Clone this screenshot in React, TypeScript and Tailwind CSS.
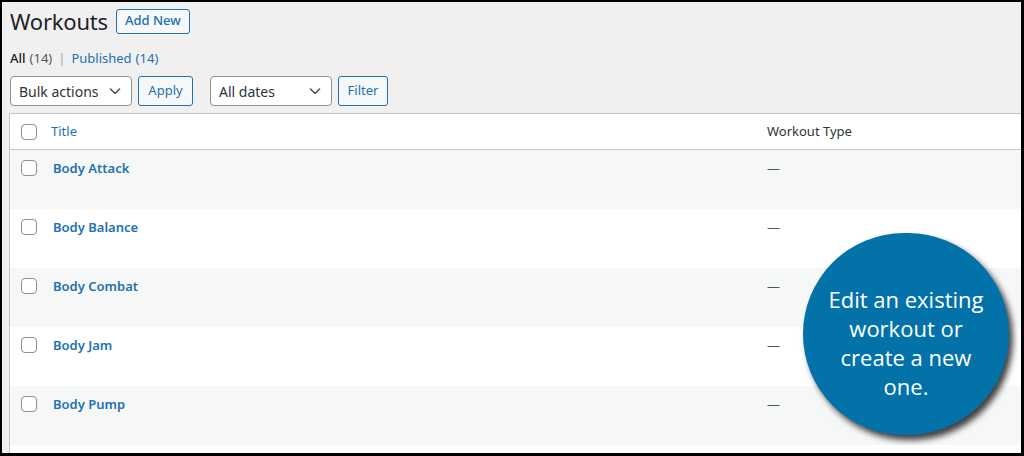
import React from 'react';

const font = { fontFamily: '"Noto Sans", "Open Sans", sans-serif' };

const workouts = ['Body Attack', 'Body Balance', 'Body Combat', 'Body Jam', 'Body Pump'];

const Chevron = () => (
  <svg width="16" height="16" viewBox="0 0 16 16" fill="none" className="shrink-0">
    <path d="M3.5 6l4.5 4.5L12.5 6" stroke="#50575e" strokeWidth="1.6" strokeLinecap="round" strokeLinejoin="round" />
  </svg>
);

const Checkbox = () => (
  <span className="block w-4 h-4 rounded-[4px] border border-[#8c8f94] bg-white shrink-0" />
);

const Select = ({ label, width }: { label: string; width: string }) => (
  <div className={`${width} h-[30px] flex items-center justify-between pl-2 pr-2 bg-white border border-[#8c8f94] rounded-[4px] text-[14px] text-[#2c3338]`}>
    <span>{label}</span>
    <Chevron />
  </div>
);

const Button = ({ label, width }: { label: string; width: string }) => (
  <div className={`${width} h-[30px] flex items-center justify-center bg-[#f6f7f7] border border-[#2271b1] rounded-[3px] text-[13px] text-[#2271b1]`}>
    {label}
  </div>
);

export default function App() {
  return (
    <div
      style={font}
      className="relative w-[1024px] h-[456px] overflow-hidden bg-[#f0f0f1] border-l-2 border-t-2 border-r-[3px] border-b-[3px] border-black"
    >
      <div className="pl-[7px] pt-[4px]">
        <div className="pl-px flex items-center gap-[8px]">
          <h1 className="text-[22px] leading-[30px] text-[#1d2327] tracking-[-0.2px]">Workouts</h1>
          <div className="h-[25px] px-[8px] flex items-center border border-[#2271b1] rounded-[3px] bg-[#f6f7f7] text-[13px] font-medium text-[#2271b1]">
            Add New
          </div>
        </div>

        <div className="pl-px mt-[12px] flex items-center text-[13px] leading-[20px] text-[#50575e]">
          <span className="text-[#1d2327] font-medium">All</span>
          <span className="ml-1">(14)</span>
          <span className="mx-[6px] text-[#a7aaad]">|</span>
          <span className="text-[#2271b1]">Published</span>
          <span className="ml-1 text-[#2271b1]">(14)</span>
        </div>

        <div className="pl-px mt-[8px] flex items-center">
          <Select label="Bulk actions" width="w-[122px]" />
          <div className="ml-[6px]">
            <Button label="Apply" width="w-[55px]" />
          </div>
          <div className="ml-[17px]">
            <Select label="All dates" width="w-[122px]" />
          </div>
          <div className="ml-[6px]">
            <Button label="Filter" width="w-[50px]" />
          </div>
        </div>

        <div className="mt-[7px] bg-white border-l border-t border-[#c3c4c7] -mr-[20px]">
          <div className="h-[36px] flex items-center border-b border-[#c3c4c7] text-[13px]">
            <div className="pl-[11px] w-[41px]">
              <Checkbox />
            </div>
            <div className="w-[716px] text-[#2271b1]">Title</div>
            <div className="text-[#2c3338]">Workout Type</div>
          </div>
          {workouts.map((w, i) => (
            <div
              key={w}
              className={`h-[59px] flex items-start pt-[9px] text-[13px] ${i % 2 === 0 ? 'bg-[#f6f7f7]' : 'bg-white'}`}
            >
              <div className="pl-[11px] w-[43px] pt-[1px]">
                <Checkbox />
              </div>
              <div className="w-[714px] font-semibold text-[#2271b1] leading-[18px]">{w}</div>
              <div className="text-[#50575e] leading-[18px]">—</div>
            </div>
          ))}
          <div className="h-[20px] bg-white" />
        </div>
      </div>

      <div className="absolute left-[801px] top-[231px] w-[206px] h-[202px] rounded-full bg-[#0372a9] shadow-[4px_5px_6px_rgba(0,0,0,0.75)] flex items-center justify-center">
        <p
          className="text-white text-center text-[22px] leading-[29px] mt-[18px]"
          style={{ fontFamily: '"Open Sans", "Noto Sans", sans-serif' }}
        >
          Edit an existing
          <br />
          workout or
          <br />
          create a new
          <br />
          one.
        </p>
      </div>
    </div>
  );
}
